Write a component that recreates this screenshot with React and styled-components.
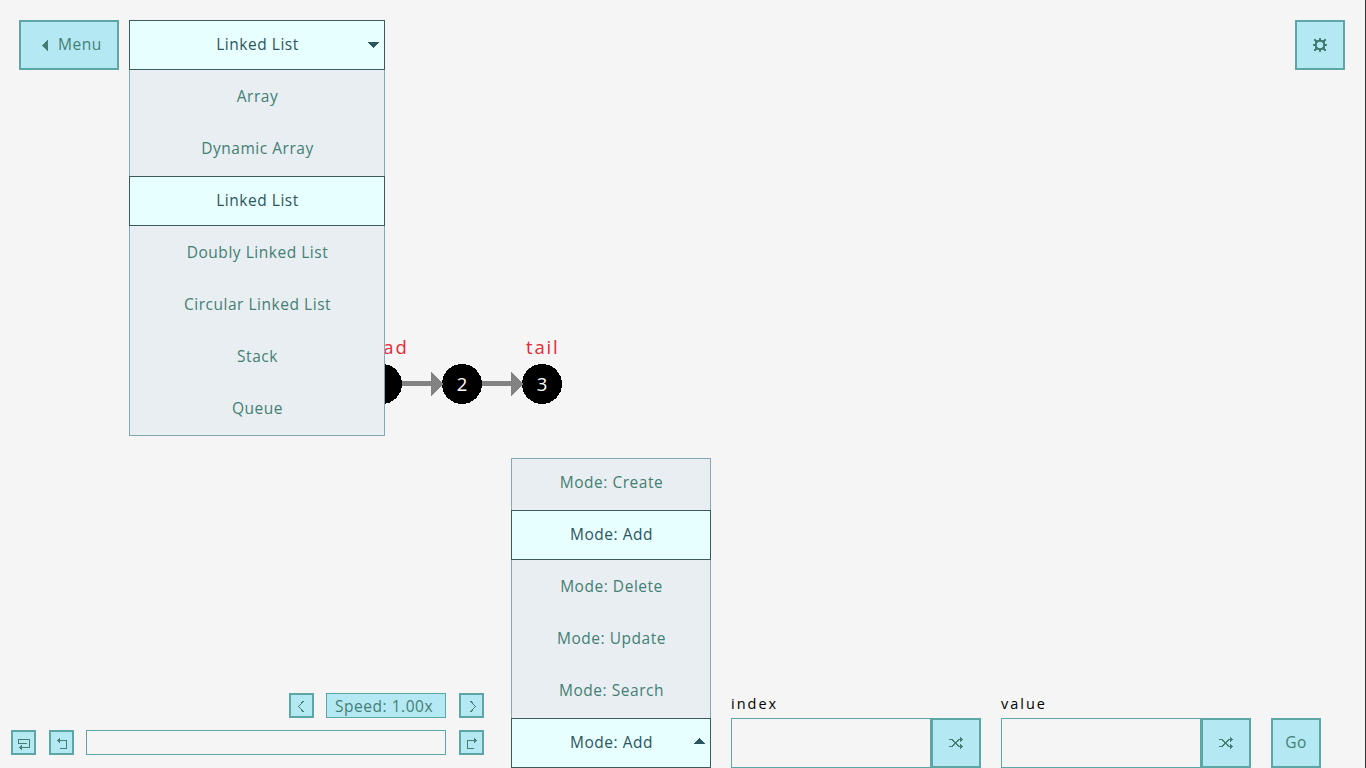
import React from "react";
import styled, { createGlobalStyle, css } from "styled-components";

const color = {
  page: "#f5f5f5",
  fill: "#b4e8f3",
  line: "#5ca6a6",
  ink: "#447f73",
  activeFill: "#e8ffff",
  activeLine: "#3b5b5f",
  activeInk: "#2b5560",
  list: "#e8eef1",
  listLine: "#82aab5",
};

const Global = createGlobalStyle`
  * { box-sizing: border-box; }
  body { margin: 0; background: ${color.page}; overflow: hidden; }
  button { font: inherit; letter-spacing: inherit; }
`;

const Screen = styled.div`
  position: relative;
  display: flex;
  flex-direction: column;
  justify-content: space-between;
  width: 1366px;
  height: 768px;
  border-right: 1px solid #303030;
  background: ${color.page};
  color: ${color.ink};
  font-family: "Open Sans", "Noto Sans", sans-serif;
  font-size: 15.5px;
  letter-spacing: 0.53px;
  line-height: 20px;
  white-space: nowrap;
`;

const TopBar = styled.header`
  display: flex;
  gap: 10px;
  padding: 20px 20px 0 19px;
`;

const Button = styled.button`
  display: flex;
  align-items: center;
  justify-content: center;
  flex: none;
  width: ${(p) => p.$width || 50}px;
  height: ${(p) => p.$height || 50}px;
  padding: 0;
  border: 2px solid ${color.line};
  background: ${color.fill};
  color: ${color.ink};
`;

const MenuButton = styled(Button).attrs({ $width: 100 })`
  justify-content: flex-start;
  gap: 9px;
  padding: 1px 0 0 21px;
`;

const SettingsButton = styled(Button)`
  margin-left: auto;
`;

const Caption = styled.span`
  padding: 0 0 2px 1px;
`;

const MenuCaption = styled(Caption)`
  padding-bottom: 3px;
`;

const GoCaption = styled(Caption)`
  padding-left: 0;
`;

const Icon = styled.svg`
  display: block;
  flex: none;
  fill: none;
  stroke: currentColor;
  stroke-width: 1;
  shape-rendering: crispEdges;
`;

const Arrow = styled(Icon)`
  fill: currentColor;
  stroke: none;
`;

const Select = styled.div`
  position: relative;
  z-index: 2;
  flex: none;
  width: ${(p) => p.$width}px;
  height: 50px;
`;

const active = css`
  border: 1px solid ${color.activeLine};
  background: ${color.activeFill};
  color: ${color.activeInk};
`;

const SelectHead = styled.div`
  ${active}
  position: relative;
  z-index: 1;
  display: grid;
  grid-template-columns: 16px 1fr 16px;
  align-items: center;
  height: 50px;
  text-align: center;
`;

const SelectArrow = styled(Arrow)`
  margin-bottom: ${(p) => (p.$up ? 4 : 0)}px;
`;

const Options = styled.ul`
  position: absolute;
  left: 0;
  ${(p) => (p.$up ? "bottom: 49px;" : "top: 49px;")}
  display: flex;
  flex-direction: column;
  gap: 2px;
  width: 100%;
  margin: 0;
  padding: ${(p) => (p.$up ? "0 0 3px" : "3px 0 2px")};
  list-style: none;
  background: ${color.list};
  box-shadow: inset 0 0 0 1px ${color.listLine};
`;

const Option = styled.li`
  display: flex;
  align-items: center;
  justify-content: center;
  height: 50px;
  ${(p) => p.$active && active}
`;

const Canvas = styled.main`
  position: absolute;
  inset: 0;
`;

const Graph = styled.svg`
  display: block;
  font-size: 18.5px;
  letter-spacing: 0;
`;

const Tag = styled.text`
  fill: #e62937;
  letter-spacing: 1.8px;
`;

const NodeValue = styled.text`
  fill: #fff;
  text-anchor: middle;
`;

const BottomBar = styled.footer`
  position: relative;
  display: flex;
  align-items: flex-end;
  gap: 20px;
  padding-left: 11px;
`;

const Playback = styled.section`
  display: flex;
  flex-direction: column;
  gap: 12px;
  width: 473px;
  margin: 0 7px 13px 0;
`;

const ControlRow = styled.div`
  display: flex;
  justify-content: flex-end;
  gap: 12px;
`;

const StepButton = styled(Button).attrs({ $width: 25, $height: 25 })`
  margin-left: ${(p) => p.$shift || 0}px;
`;

const Speed = styled.div`
  width: 120px;
  height: 25px;
  padding-left: 8px;
  border: 1px solid ${color.line};
  background: ${color.fill};
  line-height: 24px;
`;

const Progress = styled.div`
  flex: 1;
  height: 25px;
  border: 1px solid ${color.line};
`;

const Field = styled.div`
  display: flex;
  flex-direction: column;
  gap: 4px;
`;

const FieldLabel = styled.label`
  color: #000;
  font-size: 14.5px;
  letter-spacing: 2px;
`;

const FieldRow = styled.div`
  display: flex;
`;

const Input = styled.div`
  width: 200px;
  height: 50px;
  border: 1px solid ${color.line};
`;

const structures = ["Array", "Dynamic Array", "Linked List", "Doubly Linked List", "Circular Linked List", "Stack", "Queue"];
const modes = ["Mode: Create", "Mode: Add", "Mode: Delete", "Mode: Update", "Mode: Search"];

function Dropdown({ width, value, options, up }) {
  return (
    <Select $width={width}>
      <SelectHead>
        <span />
        <Caption>{value}</Caption>
        <SelectArrow $up={up} width="11" height="6">
          <path d={up ? "M0 6L5.5 0L11 6Z" : "M0 0H11L5.5 6Z"} />
        </SelectArrow>
      </SelectHead>
      <Options $up={up}>
        {options.map((o) => (
          <Option key={o} $active={o === value}><Caption>{o}</Caption></Option>
        ))}
      </Options>
    </Select>
  );
}

const stepPaths = {
  restart: "M13.5 11.5H5.5V7.5H16.5V15.5H6M8.5 13V18M7.5 14V17",
  undo: "M9 16.5H15.5V8.5H6M8.5 6V11M7.5 7V10",
  redo: "M13 16.5H6.5V8.5H16M13.5 6V11M14.5 7V10",
  slower: "M12.5 6L7.5 11.5L12.5 17",
  faster: "M9.5 6L14.5 11.5L9.5 17",
};

function Step({ icon, shift }) {
  return (
    <StepButton $shift={shift} aria-label={icon}>
      <Icon width="21" height="21"><path d={stepPaths[icon]} /></Icon>
    </StepButton>
  );
}

function RandomField({ label }) {
  return (
    <Field>
      <FieldLabel>{label}</FieldLabel>
      <FieldRow>
        <Input />
        <Button aria-label="random">
          <Icon width="14" height="12">
            <path d="M0 2.5H3L10 9.5H14M0 9.5H3L10 2.5H14M11.5 0V5M12.5 1V4M11.5 7V12M12.5 8V11" />
          </Icon>
        </Button>
      </FieldRow>
    </Field>
  );
}

export default function App() {
  return (
    <Screen>
      <Global />
      <Canvas>
        <Graph width="1365" height="560">
          <g shapeRendering="crispEdges">
            {[382, 462, 542].map((x) => <circle key={x} cx={x} cy="384" r="20" />)}
            {[402, 482].map((x) => (
              <path key={x} fill="#828282" d={`M${x} 381H${x + 29}V372L${x + 41} 384L${x + 29} 396V386H${x}Z`} />
            ))}
          </g>
          <Tag x="358" y="354">head</Tag>
          <Tag x="526" y="354">tail</Tag>
          <NodeValue x="382" y="391">1</NodeValue>
          <NodeValue x="462" y="391">2</NodeValue>
          <NodeValue x="542" y="391">3</NodeValue>
        </Graph>
      </Canvas>
      <TopBar>
        <MenuButton>
          <Arrow width="6" height="11"><path d="M6 0V11L0 5.5Z" /></Arrow>
          <MenuCaption>Menu</MenuCaption>
        </MenuButton>
        <Dropdown width={256} value="Linked List" options={structures} />
        <SettingsButton aria-label="settings">
          <Icon width="14" height="14">
            <path strokeWidth="2" d="M3 3H11V11H3Z M7 0V2M7 12V14M0 7H2M12 7H14M1 2H3M11 2H13M1 12H3M11 12H13" />
            <path d="M4 4.5H5M9 4.5H10M4 9.5H5M9 9.5H10" />
          </Icon>
        </SettingsButton>
      </TopBar>
      <BottomBar>
        <Playback>
          <ControlRow>
            <Step icon="slower" />
            <Speed>Speed: 1.00x</Speed>
            <Step icon="faster" shift={1} />
          </ControlRow>
          <ControlRow>
            <Step icon="restart" />
            <Step icon="undo" shift={1} />
            <Progress />
            <Step icon="redo" shift={1} />
          </ControlRow>
        </Playback>
        <Dropdown width={200} value="Mode: Add" options={modes} up />
        <RandomField label="index" />
        <RandomField label="value" />
        <Button><GoCaption>Go</GoCaption></Button>
      </BottomBar>
    </Screen>
  );
}
